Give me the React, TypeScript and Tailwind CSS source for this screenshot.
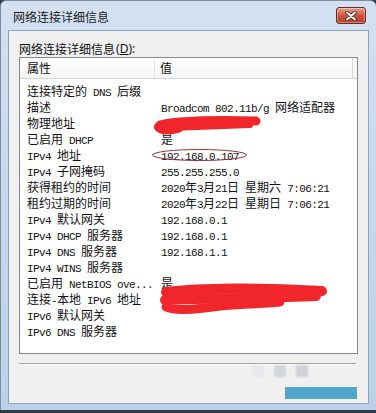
const rows: [string, string][] = [
  ["连接特定的 DNS 后缀", ""],
  ["描述", "Broadcom 802.11b/g 网络适配器"],
  ["物理地址", ""],
  ["已启用 DHCP", "是"],
  ["IPv4 地址", "192.168.0.107"],
  ["IPv4 子网掩码", "255.255.255.0"],
  ["获得租约的时间", "2020年3月21日 星期六 7:06:21"],
  ["租约过期的时间", "2020年3月22日 星期日 7:06:21"],
  ["IPv4 默认网关", "192.168.0.1"],
  ["IPv4 DHCP 服务器", "192.168.0.1"],
  ["IPv4 DNS 服务器", "192.168.1.1"],
  ["IPv4 WINS 服务器", ""],
  ["已启用 NetBIOS ove...", "是"],
  ["连接-本地 IPv6 地址", ""],
  ["IPv6 默认网关", ""],
  ["IPv6 DNS 服务器", ""],
];

// latin runs are half-width mono, cjk runs full width
function Mixed({ text }: { text: string }) {
  const parts = text.split(/([\u0000-\u00ff]+)/).filter((p) => p.length > 0);
  return (
    <>
      {parts.map((p, i) =>
        /^[\u0000-\u00ff]+$/.test(p) ? (
          <span key={i} className="font-['Liberation_Mono',monospace] text-[11px] tracking-[-0.6px] leading-none whitespace-pre">
            {p}
          </span>
        ) : (
          <span key={i} className="font-['Noto_Sans_CJK_SC',sans-serif] text-[12px] leading-none">
            {p}
          </span>
        )
      )}
    </>
  );
}

function CloseButton() {
  return (
    <div className="w-[30px] h-[17px] rounded-[3px] border border-[#6d2a22] bg-gradient-to-b from-[#e8a493] via-[#c9533f] to-[#b8402c] flex items-center justify-center shadow-[inset_0_0_0_1px_rgba(255,255,255,0.35)]">
      <svg width="12" height="10" viewBox="0 0 12 10">
        <path d="M2 1.5 L10 8.5 M10 1.5 L2 8.5" stroke="#3a1a16" strokeWidth="3.4" strokeLinecap="round" />
        <path d="M2 1.5 L10 8.5 M10 1.5 L2 8.5" stroke="#ffffff" strokeWidth="2" strokeLinecap="round" />
      </svg>
    </div>
  );
}

export default function App() {
  return (
    <div className="w-[376px] h-[413px] bg-[#2f3a46] overflow-hidden">
      <div className="w-[376px] h-[410px] flex flex-col rounded-t-[6px] border-t border-l border-[#7a8ca3] bg-gradient-to-b from-[#d3e1f1] via-[#c6d8ec] to-[#bcd1e8]">
        {/* title bar */}
        <div className="h-[29px] flex items-center justify-between pl-[12px] pr-[10px] shrink-0">
          <span className="font-['Noto_Sans_CJK_SC',sans-serif] text-[12px] text-[#1b1b1b] leading-none mt-[3px]">
            网络连接详细信息
          </span>
          <CloseButton />
        </div>

        {/* client area */}
        <div className="flex-1 flex pl-[7px] pr-[7px] pb-[6px]">
          <div className="flex-1 bg-[#f0f0f0] border border-[#8ea3bd] flex flex-col px-[10px] pt-[11px] relative">
            <div className="h-[14px] leading-[14px] text-[#111] flex items-end">
              <span className="font-['Noto_Sans_CJK_SC',sans-serif] text-[12px]">网络连接详细信息</span>
              <span className="font-['Noto_Sans',sans-serif] text-[12px] ml-[1px]">
                (<span className="underline">D</span>):
              </span>
            </div>

            {/* list view */}
            <div className="mt-[1px] h-[297px] bg-white border border-[#828790] flex flex-col relative">
              <div className="h-[21px] flex bg-gradient-to-b from-white to-[#f4f5f7] border-b border-[#d5d5d5] text-[#111] shrink-0">
                <div className="w-[135px] border-r border-[#e1e3e6] pl-[7px] flex items-center">
                  <Mixed text="属性" />
                </div>
                <div className="w-[198px] border-r border-[#d5d5d5] pl-[5px] flex items-center">
                  <Mixed text="值" />
                </div>
                <div className="flex-1" />
              </div>

              <div className="pt-[3px] flex flex-col text-[#111]">
                {rows.map(([k, v], i) => (
                  <div key={i} className="h-[16px] flex items-center whitespace-nowrap">
                    <div className="w-[141px] pl-[7px] leading-none">
                      <Mixed text={k} />
                    </div>
                    <div className="leading-none">
                      <Mixed text={v} />
                    </div>
                  </div>
                ))}
              </div>

              {/* marks drawn on the screenshot */}
              <svg className="absolute left-0 top-0 pointer-events-none" width="338" height="297" viewBox="0 0 338 297">
                <ellipse cx="179.5" cy="97" rx="47" ry="5.5" fill="none" stroke="#9a3030" strokeWidth="1" />
                <g stroke="#f0262a" strokeLinecap="round" strokeLinejoin="round" fill="none">
                  <path d="M140 67 C 160 62, 200 62, 236 63" strokeWidth="9" />
                  <path d="M139 69 C 142 72, 150 72, 158 70" strokeWidth="10" />
                  <path d="M150 70 C 180 69, 210 68, 230 67" strokeWidth="6" />
                  <path d="M146 234 C 180 230, 240 229, 302 233" strokeWidth="10" />
                  <path d="M145 242 C 190 240, 250 240, 296 238" strokeWidth="10" />
                  <path d="M146 249 C 155 253, 170 252, 200 248 C 220 246, 240 246, 260 244" strokeWidth="9" />
                </g>
              </svg>
            </div>

            <div className="mt-[9px] h-[2px] border-t border-[#a0a0a0] border-b border-b-white mr-[2px]" />

            {/* blurred area over the button */}
            <div className="flex justify-end mt-[14px] pr-[1px] relative">
              <div className="absolute right-[50px] -top-[14px] flex gap-[10px] blur-[1px] opacity-70">
                <div className="w-[12px] h-[12px] bg-[#e4e6ea]" />
                <div className="w-[12px] h-[12px] bg-[#c9ccd3]" />
                <div className="w-[12px] h-[12px] bg-[#c3c6cd]" />
              </div>
              <div className="w-[72px] h-[12px] bg-[#52a6cc] blur-[0.6px] mt-[8px]" />
            </div>
          </div>
        </div>
      </div>
    </div>
  );
}
